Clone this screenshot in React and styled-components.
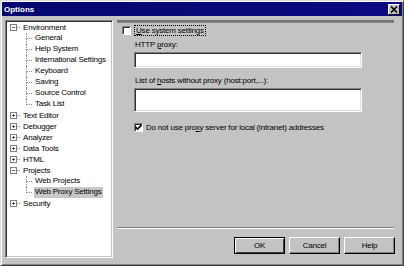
import React from "react";
import styled, { createGlobalStyle } from "styled-components";

const GlobalStyle = createGlobalStyle`
  html, body {
    margin: 0;
    padding: 0;
    background: #c3c3c3;
    overflow: hidden;
  }
  body {
    font-family: "Liberation Sans", Arial, sans-serif;
    font-size: 8px;
    letter-spacing: -0.2px;
    color: #000;
  }
`;

const tree = [
  {
    label: "Environment",
    open: true,
    children: ["General", "Help System", "International Settings", "Keyboard", "Saving", "Source Control", "Task List"],
  },
  { label: "Text Editor" },
  { label: "Debugger" },
  { label: "Analyzer" },
  { label: "Data Tools" },
  { label: "HTML" },
  { label: "Projects", open: true, children: ["Web Projects", "Web Proxy Settings"] },
  { label: "Security" },
];

function Expander({ open }) {
  return (
    <ExpandBox>
      <svg width="5" height="5" viewBox="0 0 5 5">
        <path d="M0 2.5h5" stroke="#000" strokeWidth="1" />
        {!open && <path d="M2.5 0v5" stroke="#000" strokeWidth="1" />}
      </svg>
    </ExpandBox>
  );
}

function CheckBox({ checked }) {
  return (
    <Box>
      {checked && (
        <svg width="7" height="7" viewBox="0 0 7 7">
          <path d="M0.5 3 L2.5 5 L6.5 1" stroke="#000" strokeWidth="1.6" fill="none" />
        </svg>
      )}
    </Box>
  );
}

function App() {
  return (
    <>
      <GlobalStyle />
      <Window>
        <TitleBar>
          <Title>Options</Title>
          <CloseButton>
            <svg width="8" height="7" viewBox="0 0 8 7">
              <path d="M1 0.5 L7 6.5 M7 0.5 L1 6.5" stroke="#000" strokeWidth="1.6" />
            </svg>
          </CloseButton>
        </TitleBar>
        <Body>
          <TreePanel>
            {tree.map((node) => (
              <div key={node.label}>
                <RootRow>
                  <Expander open={node.open} />
                  <Stub />
                  <ItemText>{node.label}</ItemText>
                </RootRow>
                {node.open &&
                  node.children.map((child, i) => (
                    <ChildRow key={child}>
                      <Connector>
                        <ConnTop />
                        <ConnBottom last={i === node.children.length - 1} />
                      </Connector>
                      <ItemText selected={child === "Web Proxy Settings"}>{child}</ItemText>
                    </ChildRow>
                  ))}
              </div>
            ))}
          </TreePanel>
          <RightColumn>
            <HeaderBar />
            <CheckRow top={2} indent={6}>
              <CheckBox />
              <FocusLabel>
                <u>U</u>se system settings
              </FocusLabel>
            </CheckRow>
            <FieldLabel top={4}>
              HTTP <u>p</u>roxy:
            </FieldLabel>
            <TextInput height={16} />
            <FieldLabel top={8}>
              List of <u>h</u>osts without proxy (host:port,...):
            </FieldLabel>
            <TextInput height={24} />
            <CheckRow top={10} indent={18}>
              <CheckBox checked />
              <CheckLabel>
                Do not use pro<u>x</u>y server for local (intranet) addresses
              </CheckLabel>
            </CheckRow>
            <Spacer />
            <Separator />
            <ButtonRow>
              <Button isDefault>OK</Button>
              <Button>Cancel</Button>
              <Button>Help</Button>
            </ButtonRow>
          </RightColumn>
        </Body>
      </Window>
    </>
  );
}

export default App;

const Window = styled.div`
  width: 404px;
  height: 266px;
  box-sizing: border-box;
  display: flex;
  flex-direction: column;
  background: #c3c3c3;
  border: 1px solid;
  border-color: #dcdcdc #404040 #404040 #dcdcdc;
  box-shadow: inset 1px 1px #fff, inset -1px -1px #808080;
  padding: 1px;
`;

const TitleBar = styled.div`
  height: 14px;
  background: linear-gradient(90deg, #06066e, #0a0a82);
  display: flex;
  align-items: center;
  justify-content: space-between;
  padding: 0 2px 0 2px;
`;

const Title = styled.span`
  color: #fff;
  font-weight: bold;
  font-size: 8px;
  letter-spacing: 0;
`;

const CloseButton = styled.div`
  width: 10px;
  height: 9px;
  background: #c3c3c3;
  border: 1px solid;
  border-color: #fff #000 #000 #fff;
  display: flex;
  align-items: center;
  justify-content: center;
`;

const Body = styled.div`
  flex: 1;
  display: flex;
  padding: 4px 5px 6px 3px;
  gap: 3px;
  min-height: 0;
`;

const TreePanel = styled.div`
  width: 108px;
  box-sizing: border-box;
  background: #fff;
  border: 1px solid;
  border-color: #808080 #fff #fff #808080;
  box-shadow: inset 1px 1px #303030, inset -1px -1px #c3c3c3;
  padding: 1px 2px;
`;

const RootRow = styled.div`
  height: 11px;
  display: flex;
  align-items: center;
  padding-left: 2px;
`;

const ExpandBox = styled.span`
  width: 7px;
  height: 7px;
  box-sizing: border-box;
  border: 1px solid #808080;
  display: flex;
  align-items: center;
  justify-content: center;
  background: #fff;
  svg {
    width: 3px;
    height: 3px;
  }
`;

const Stub = styled.span`
  width: 3px;
  border-top: 1px dotted #909090;
`;

const ItemText = styled.span`
  margin-left: 2px;
  padding: 0 1px;
  line-height: 10px;
  white-space: nowrap;
  background: ${(p) => (p.selected ? "#c8c8c8" : "transparent")};
`;

const ChildRow = styled.div`
  height: 11px;
  display: flex;
  align-items: stretch;
  padding-left: 18px;
`;

const Connector = styled.span`
  width: 6px;
  display: flex;
  flex-direction: column;
`;

const ConnTop = styled.span`
  flex: 1;
  border-left: 1px dotted #909090;
  border-bottom: 1px dotted #909090;
`;

const ConnBottom = styled.span`
  flex: 1;
  border-left: 1px dotted ${(p) => (p.last ? "transparent" : "#909090")};
`;

const RightColumn = styled.div`
  flex: 1;
  display: flex;
  flex-direction: column;
`;

const HeaderBar = styled.div`
  height: 3px;
  margin: 0 3px 0 1px;
  background: linear-gradient(#6a6a6a, #8a8a8a);
`;

const CheckRow = styled.div`
  height: 11px;
  display: flex;
  align-items: center;
  margin-top: ${(p) => p.top}px;
  padding-left: ${(p) => p.indent}px;
`;

const Box = styled.span`
  width: 9px;
  height: 9px;
  box-sizing: border-box;
  background: #fff;
  border: 1px solid;
  border-color: #808080 #fff #fff #808080;
  box-shadow: inset 1px 1px #303030;
  display: flex;
  align-items: center;
  justify-content: center;
  flex-shrink: 0;
`;

const FocusLabel = styled.span`
  margin-left: 3px;
  padding: 0 1px;
  line-height: 9px;
  border: 1px dotted #000;
  white-space: nowrap;
`;

const CheckLabel = styled.span`
  margin-left: 3px;
  white-space: nowrap;
`;

const FieldLabel = styled.div`
  height: 10px;
  line-height: 10px;
  margin-top: ${(p) => p.top}px;
  padding-left: 19px;
  white-space: nowrap;
`;

const TextInput = styled.div`
  margin: 2px 0 0 18px;
  width: 228px;
  height: ${(p) => p.height}px;
  box-sizing: border-box;
  background: #fff;
  border: 1px solid;
  border-color: #808080 #fff #fff #808080;
  box-shadow: inset 1px 1px #303030, inset -1px -1px #dcdcdc;
`;

const Spacer = styled.div`
  flex: 1;
`;

const Separator = styled.div`
  height: 0;
  margin: 0 3px 0 1px;
  border-top: 1px solid #808080;
  border-bottom: 1px solid #fff;
`;

const ButtonRow = styled.div`
  display: flex;
  justify-content: flex-end;
  gap: 4px;
  margin-top: 8px;
  margin-bottom: 4px;
  padding-right: 2px;
`;

const Button = styled.div`
  width: 51px;
  height: 17px;
  box-sizing: border-box;
  display: flex;
  align-items: center;
  justify-content: center;
  background: #c3c3c3;
  border: 1px solid;
  border-color: ${(p) => (p.isDefault ? "#000" : "#fff #000 #000 #fff")};
  box-shadow: ${(p) =>
    p.isDefault
      ? "inset 1px 1px #fff, inset -1px -1px #404040"
      : "inset -1px -1px #808080"};
`;
